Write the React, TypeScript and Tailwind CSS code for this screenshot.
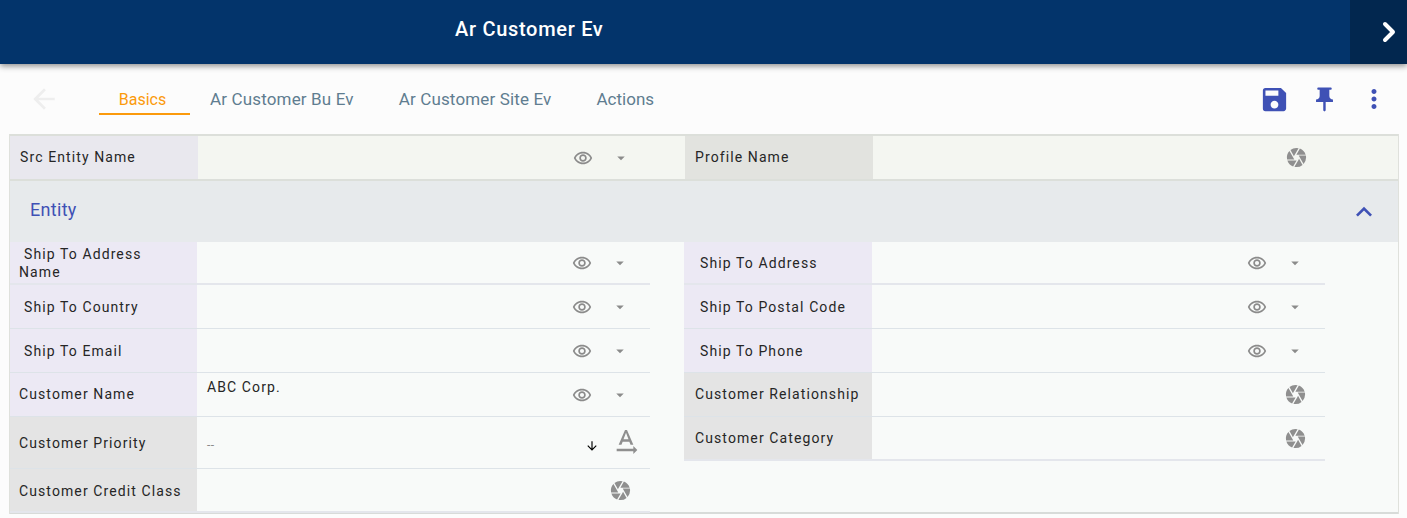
import React from 'react';
import { ChevronRight } from 'lucide-react';
import {
  MdArrowBack,
  MdArrowDownward,
  MdArrowDropDown,
  MdCamera,
  MdKeyboardArrowUp,
  MdMoreVert,
  MdOutlineRemoveRedEye,
  MdPushPin,
  MdSave,
  MdTextRotationNone,
} from 'react-icons/md';

type RowProps = {
  label: string;
  labelClass: string;
  height: string;
  border: string;
  indent?: boolean;
  value?: React.ReactNode;
  actions: React.ReactNode;
};

const PickActions = () => (
  <div className="flex items-center gap-[19px] mr-[21px]">
    <MdOutlineRemoveRedEye className="text-[20px] text-[#8b8b8b]" />
    <MdArrowDropDown className="text-[18px] text-[#8b8b8b]" />
  </div>
);

const CameraAction = () => (
  <MdCamera className="text-[23px] text-[#8f8f8f] mr-[18px]" />
);

const Row = ({ label, labelClass, height, border, indent, value, actions }: RowProps) => (
  <div className={`flex ${height} ${border}`}>
    <div className={`shrink-0 flex items-center text-[14px] leading-[18px] tracking-[1.1px] text-[#262626] ${labelClass}`}>
      {indent ? <span className="indent-[5px] max-w-[160px]">{label}</span> : <span>{label}</span>}
    </div>
    <div className="flex-1 relative flex items-center justify-end">
      {value}
      {actions}
    </div>
  </div>
);

const leftPurple = 'w-[187px] pl-[9px] bg-[#ece9f4]';
const leftGray = 'w-[187px] pl-[9px] bg-[#e4e4e4]';
const rightPurple = 'w-[188px] pl-[11px] bg-[#ece9f4]';
const rightGray = 'w-[188px] pl-[11px] bg-[#e4e4e4]';
const line = 'border-b border-[#dde3e8]';
const thick = 'border-b-2 border-[#e4e6ec]';

export default function App() {
  return (
    <div className="w-[1407px] h-[518px] overflow-hidden bg-[#fcfcfc] font-['Roboto',sans-serif]">
      <header className="relative z-10 h-16 bg-[#03346b] flex shadow-[0_2px_6px_rgba(0,0,0,0.45)]">
        <div className="flex-1 pl-[455px] pt-[17px] text-[20px] leading-6 font-medium tracking-[0.7px] text-white">Ar Customer Ev</div>
        <div className="w-[57px] bg-[#02274f] flex items-center justify-end pr-[2px]">
          <ChevronRight size={32} strokeWidth={3} className="text-white" />
        </div>
      </header>

      <nav className="h-[70px] ml-[9px] flex items-center">
        <MdArrowBack className="text-[32px] text-[#eeeeee] ml-[19px] mr-[39px]" />
        <div className="h-[30px] w-[91px] mt-[1px] border-b-2 border-[#fb9a0c] text-center text-[16px] leading-[30px] text-[#fb9a0c] pr-[4px]">Basics</div>
        <div className="ml-[20px] mt-[1px] text-[17px] tracking-[0.15px] text-[#5f7d90]">Ar Customer Bu Ev</div>
        <div className="ml-[45px] mt-[1px] text-[17px] tracking-[0.15px] text-[#5f7d90]">Ar Customer Site Ev</div>
        <div className="ml-[45px] mt-[1px] text-[17px] text-[#5f7d90]">Actions</div>
        <div className="ml-auto mr-[18px] flex items-center text-[#3f51b5]">
          <MdSave className="text-[31px]" />
          <MdPushPin className="text-[29px] ml-[20px]" />
          <MdMoreVert className="text-[30px] ml-[20px]" />
        </div>
      </nav>

      <section className="ml-[9px] mr-[8px] border-x border-[#dfe1dc] bg-[#f8faf9]">
        <div className="flex h-[47px] bg-[#f4f6f1] border-t-2 border-b-2 border-[#dcdfda]">
          <div className="w-[641px]">
            <Row label="Src Entity Name" labelClass="w-[188px] pl-[10px] pb-[2px] bg-[#e9e8ee]" height="h-full" border="" actions={<PickActions />} />
          </div>
          <div className="w-[641px] ml-[34px]">
            <Row label="Profile Name" labelClass="w-[188px] pl-[10px] pb-[2px] bg-[#e2e3df]" height="h-full" border="" actions={<CameraAction />} />
          </div>
        </div>

        <div className="h-[61px] bg-[#e7eaec] flex items-center justify-between pl-[20px] pr-[18px]">
          <span className="text-[18px] tracking-[0.3px] text-[#3f51b5] mb-[4px]">Entity</span>
          <MdKeyboardArrowUp className="text-[32px] text-[#3f51b5]" />
        </div>

        <div className="flex h-[272px] border-b-2 border-[#d8dbd9]">
          <div className="w-[640px]">
            <Row label="Ship To Address Name" indent labelClass={leftPurple} height="h-[43px]" border={thick} actions={<PickActions />} />
            <Row label="Ship To Country" indent labelClass={leftPurple} height="h-[44px]" border={line} actions={<PickActions />} />
            <Row label="Ship To Email" indent labelClass={leftPurple} height="h-[44px]" border={line} actions={<PickActions />} />
            <Row
              label="Customer Name"
              labelClass={`${leftPurple} pb-[2px]`}
              height="h-[44px]"
              border={line}
              value={<span className="absolute left-[10px] top-[4px] text-[14px] tracking-[1.1px] text-[#262626]">ABC Corp.</span>}
              actions={<PickActions />}
            />
            <Row
              label="Customer Priority"
              labelClass={leftGray}
              height="h-[52px]"
              border={line}
              value={<span className="absolute left-[10px] top-[19px] text-[12px] tracking-[0.5px] text-[#8b8b8b]">--</span>}
              actions={
                <div className="flex items-center mr-[8px] mt-[-1px]">
                  <MdArrowDownward className="text-[14px] text-black mt-[7px]" />
                  <MdTextRotationNone className="text-[32px] text-[#8f8f8f] ml-[11px]" />
                </div>
              }
            />
            <Row label="Customer Credit Class" labelClass={`${leftGray} pt-[2px]`} height="h-[44px]" border={thick} actions={<CameraAction />} />
          </div>
          <div className="w-[641px] ml-[34px]">
            <Row label="Ship To Address" indent labelClass={rightPurple} height="h-[43px]" border={thick} actions={<PickActions />} />
            <Row label="Ship To Postal Code" indent labelClass={rightPurple} height="h-[44px]" border={line} actions={<PickActions />} />
            <Row label="Ship To Phone" indent labelClass={rightPurple} height="h-[44px]" border={line} actions={<PickActions />} />
            <Row label="Customer Relationship" labelClass={`${rightGray} pb-[2px]`} height="h-[44px]" border={line} actions={<CameraAction />} />
            <Row label="Customer Category" labelClass={rightGray} height="h-[44px]" border={thick} actions={<CameraAction />} />
          </div>
        </div>
      </section>
    </div>
  );
}
